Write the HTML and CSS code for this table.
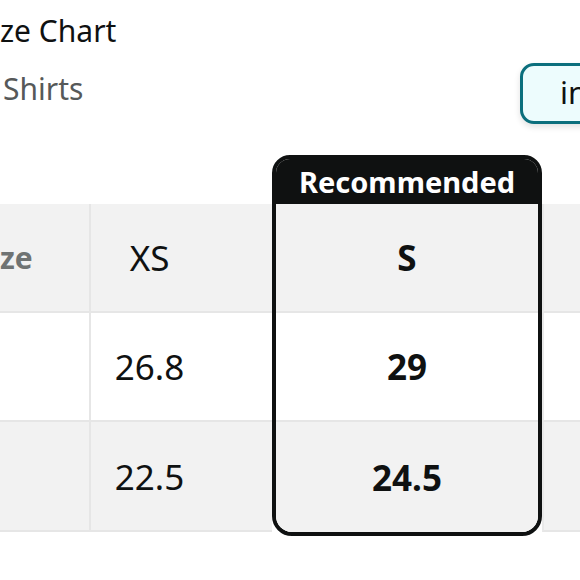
FILE: index.html
```html
<!DOCTYPE html>
<html>
<head>
<meta charset="utf-8">
<link rel="stylesheet" href="styles.css">
</head>
<body>
<div class="page">
  <div class="title">ze Chart</div>
  <div class="subrow">
    <div class="category">Shirts</div>
    <div class="unit-btn">in</div>
  </div>
  <div class="chart">
    <div class="col col-label">
      <div class="cell head">ze</div>
      <div class="cell row-white"></div>
      <div class="cell row-gray last"></div>
    </div>
    <div class="col col-xs">
      <div class="cell head">XS</div>
      <div class="cell row-white">26.8</div>
      <div class="cell row-gray last">22.5</div>
    </div>
    <div class="col col-rec">
      <div class="rec-label">Recommended</div>
      <div class="cell head">S</div>
      <div class="cell row-white">29</div>
      <div class="cell row-gray last">24.5</div>
    </div>
    <div class="col col-next">
      <div class="cell head"></div>
      <div class="cell row-white"></div>
      <div class="cell row-gray last"></div>
    </div>
  </div>
</div>
</body>
</html>
```

FILE: styles.css
```css
html, body {
  margin: 0;
  padding: 0;
  background: #ffffff;
}
body {
  width: 580px;
  height: 580px;
  overflow: hidden;
  font-family: "Noto Sans", "Open Sans", sans-serif;
  color: #0f1111;
}
.page {
  width: 580px;
}
.title {
  font-size: 30px;
  line-height: 40px;
  padding-top: 11px;
  padding-left: 0;
  color: #0f1111;
}
.subrow {
  display: flex;
  justify-content: space-between;
  align-items: center;
  height: 64px;
  margin-top: 11px;
}
.category {
  font-size: 30px;
  color: #565959;
  padding-left: 3px;
  margin-top: -12px;
}
.unit-btn {
  box-sizing: border-box;
  width: 110px;
  height: 61px;
  margin-right: -50px;
  margin-top: -2px;
  border: 3px solid #0b6f7d;
  border-radius: 14px;
  background: #edfcfd;
  box-shadow: 0 3px 6px rgba(0, 0, 0, 0.12);
  font-size: 31px;
  line-height: 53px;
  padding-left: 37px;
  color: #0f1111;
}
.chart {
  display: flex;
  align-items: flex-start;
  margin-top: 29px;
}
.col {
  display: flex;
  flex-direction: column;
  box-sizing: border-box;
  padding-top: 49px;
}
.col-label {
  width: 91px;
}
.col-label .cell {
  border-right: 2px solid #e6e6e6;
}
.col-xs {
  width: 181px;
}
.col-next {
  flex: 1;
}
.col-next .cell {
  border-left: 2px solid #e9e9e9;
}
.cell {
  display: flex;
  align-items: center;
  justify-content: center;
  box-sizing: border-box;
  font-size: 35px;
  border-bottom: 2px solid #e6e6e6;
}
.head {
  height: 109px;
  background: #f2f2f2;
}
.row-white {
  height: 109px;
  background: #ffffff;
}
.row-gray {
  height: 110px;
  background: #f2f2f2;
}
.col-label .cell {
  justify-content: flex-start;
}
.col-label .head {
  font-weight: 700;
  color: #6f7373;
  font-size: 30px;
  padding-left: 0;
}
.col-xs .cell {
  padding-right: 64px;
}
.col-rec {
  width: 270px;
  padding-top: 0;
  border: 4px solid #0f1111;
  border-radius: 18px 18px 20px 20px;
  overflow: hidden;
}
.rec-label {
  height: 45px;
  background: #0f1111;
  color: #ffffff;
  font-weight: 700;
  font-size: 29px;
  line-height: 45px;
  text-align: center;
}
.col-rec .cell {
  font-weight: 700;
}
.col-rec .last {
  height: 110px;
  border-bottom: none;
}
```
